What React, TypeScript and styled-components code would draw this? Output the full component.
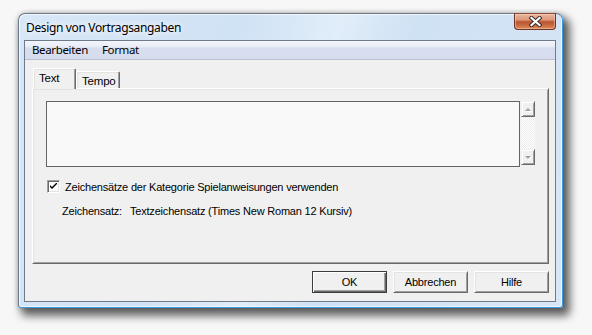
import React from "react";
import styled, { createGlobalStyle } from "styled-components";

const GlobalStyle = createGlobalStyle`
  html, body { margin: 0; padding: 0; background: #f7f7f7; }
  body { width: 592px; height: 335px; overflow: hidden; }
`;

const Page = styled.div`
  padding: 13px 0 0 18px;
  font-family: "Liberation Sans", Arial, sans-serif;
`;

const Window = styled.div`
  box-sizing: border-box;
  width: 545px;
  height: 295px;
  display: flex;
  flex-direction: column;
  padding: 0 6px 5px 5px;
  border: 1px solid #6b7888;
  border-right-color: #3a9be0;
  border-bottom-color: #3a9be0;
  border-radius: 7px 7px 3px 3px;
  background: linear-gradient(
    110deg,
    #d7e7f7 0%,
    #d0e2f5 35%,
    #e1edf9 50%,
    #cfe1f4 62%,
    #d8e7f7 100%
  );
  box-shadow: 0 0 5px rgba(0, 0, 0, 0.22), 5px 6px 9px 2px rgba(0, 0, 0, 0.6),
    inset 1px 1px 0 rgba(255, 255, 255, 0.75),
    inset -1px -1px 0 rgba(255, 255, 255, 0.6);
`;

const TitleBar = styled.div`
  height: 26px;
  display: flex;
  align-items: flex-start;
  justify-content: space-between;
`;

const Title = styled.span`
  padding-left: 2px;
  line-height: 27px;
  font-family: "Noto Sans", "Open Sans", sans-serif;
  font-size: 12px;
  letter-spacing: -0.35px;
  color: #000;
  text-shadow: 0 0 6px #fff, 0 0 10px rgba(255, 255, 255, 0.9);
`;

const CloseButton = styled.div`
  box-sizing: border-box;
  width: 42px;
  height: 17px;
  margin-top: -1px;
  border: 1px solid #6d3422;
  border-top-color: #8a4a35;
  border-radius: 0 0 4px 4px;
  display: flex;
  align-items: center;
  justify-content: center;
  background: linear-gradient(
    to bottom,
    #e9b7a0 0%,
    #dc9677 40%,
    #b9552f 52%,
    #c4653c 70%,
    #db8a5d 100%
  );
  box-shadow: inset 0 0 0 1px rgba(255, 220, 200, 0.45);
`;

const Client = styled.div`
  flex: 1;
  display: flex;
  flex-direction: column;
  border: 1px solid #6f7b88;
  background: #f0f0f0;
`;

const MenuBar = styled.div`
  height: 18px;
  display: flex;
  align-items: center;
  border-bottom: 1px solid #b9c0d2;
  background: linear-gradient(
    to bottom,
    #f3f5fb 0%,
    #e8ecf7 32%,
    #d9deef 38%,
    #d6dbee 100%
  );
`;

const MenuItem = styled.span`
  padding: 0 7px;
  font-family: "Noto Sans", "Open Sans", sans-serif;
  font-size: 11.5px;
  letter-spacing: -0.35px;
  line-height: 18px;
  color: #000;
`;

const Body = styled.div`
  flex: 1;
  display: flex;
  flex-direction: column;
  padding: 8px 6px 8px 7px;
  font-size: 11px;
  letter-spacing: -0.2px;
  color: #000;
`;

const TabStrip = styled.div`
  height: 21px;
  margin-bottom: -1px;
  padding-left: 1px;
  display: flex;
  align-items: flex-start;
  position: relative;
  z-index: 1;
`;

const Tab = styled.div<{ $active?: boolean }>`
  box-sizing: border-box;
  height: ${(p) => (p.$active ? "21px" : "17px")};
  margin-top: ${(p) => (p.$active ? "0" : "3px")};
  width: ${(p) => (p.$active ? "43px" : "44px")};
  padding: 3px 0 0 5px;
  font-size: 11.5px;
  line-height: 13px;
  background: #f0f0f0;
  border-top: 1px solid #fff;
  border-left: 1px solid #fff;
  border-right: 1px solid #696969;
  border-radius: 2px 2px 0 0;
  box-shadow: inset -1px 0 0 #a0a0a0, inset 1px 1px 0 #e3e3e3;
`;

const TabPanel = styled.div`
  box-sizing: border-box;
  height: 176px;
  display: flex;
  flex-direction: column;
  padding: 12px 12px 0 13px;
  border: 1px solid;
  border-color: #fff #696969 #696969 #fff;
  box-shadow: inset 1px 1px 0 #e3e3e3, inset -1px -1px 0 #a0a0a0;
`;

const EditRow = styled.div`
  display: flex;
  align-items: flex-start;
  gap: 1px;
`;

const TextBox = styled.div`
  box-sizing: border-box;
  width: 474px;
  height: 66px;
  border: 1px solid #646464;
  background: #f9f9f9;
`;

const ScrollBar = styled.div`
  width: 14px;
  height: 64px;
  display: flex;
  flex-direction: column;
`;

const ArrowButton = styled.div`
  box-sizing: border-box;
  height: 16px;
  display: flex;
  align-items: center;
  justify-content: center;
  background: #f0f0f0;
  border: 1px solid;
  border-color: #f0f0f0 #696969 #696969 #f0f0f0;
  box-shadow: inset 1px 1px 0 #fff, inset -1px -1px 0 #a0a0a0;
`;

const Arrow = styled.span<{ $down?: boolean }>`
  width: 0;
  height: 0;
  border-left: 3px solid transparent;
  border-right: 3px solid transparent;
  ${(p) =>
    p.$down
      ? "border-top: 3px solid #a0a0a0;"
      : "border-bottom: 3px solid #a0a0a0;"}
  filter: drop-shadow(1px 1px 0 #fff);
`;

const Track = styled.div`
  flex: 1;
  background-color: #f6f6f6;
  background-image: repeating-conic-gradient(#ffffff 0 25%, #ececec 0 50%);
  background-size: 2px 2px;
`;

const CheckRow = styled.label`
  margin-top: 13px;
  padding-left: 1px;
  display: flex;
  align-items: center;
  gap: 5px;
  height: 13px;
`;

const CheckBox = styled.span`
  box-sizing: border-box;
  width: 13px;
  height: 13px;
  display: flex;
  align-items: center;
  justify-content: center;
  background: #fff;
  border: 1px solid;
  border-color: #a0a0a0 #fff #fff #a0a0a0;
  box-shadow: inset 1px 1px 0 #696969, inset -1px -1px 0 #e3e3e3;
`;

const FontRow = styled.div`
  margin-top: 12px;
  padding-left: 16px;
  display: grid;
  grid-template-columns: 68px auto;
  line-height: 13px;
`;

const ButtonRow = styled.div`
  margin-top: 7px;
  display: flex;
  justify-content: flex-end;
  gap: 6px;
`;

const Button = styled.div<{ $default?: boolean }>`
  box-sizing: border-box;
  width: 75px;
  height: 22px;
  display: flex;
  align-items: center;
  justify-content: center;
  background: #f0f0f0;
  border: 1px solid;
  ${(p) =>
    p.$default
      ? `border-color: #3c3c3c;
         box-shadow: inset 1px 1px 0 #fff, inset -1px -1px 0 #696969, inset -2px -2px 0 #a0a0a0;`
      : `border-color: #fff #696969 #696969 #fff;
         box-shadow: inset 1px 1px 0 #e3e3e3, inset -1px -1px 0 #a0a0a0;`}
`;

const CloseIcon = () => (
  <svg width="13" height="11" viewBox="0 0 13 11">
    <path
      d="M2.5 2 L10.5 9 M10.5 2 L2.5 9"
      stroke="#3b2b28"
      strokeWidth="4.2"
      strokeLinecap="square"
      fill="none"
    />
    <path
      d="M2.5 2 L10.5 9 M10.5 2 L2.5 9"
      stroke="#ffffff"
      strokeWidth="2.2"
      strokeLinecap="square"
      fill="none"
    />
  </svg>
);

const CheckMark = () => (
  <svg width="7" height="7" viewBox="0 0 7 7">
    <path d="M0 2 L0 4 L2 6 L7 1 L7 -1 L2 4 Z" fill="#000" />
  </svg>
);

export default function App() {
  return (
    <>
      <GlobalStyle />
      <Page>
        <Window>
          <TitleBar>
            <Title>Design von Vortragsangaben</Title>
            <CloseButton>
              <CloseIcon />
            </CloseButton>
          </TitleBar>
          <Client>
            <MenuBar>
              <MenuItem>Bearbeiten</MenuItem>
              <MenuItem>Format</MenuItem>
            </MenuBar>
            <Body>
              <TabStrip>
                <Tab $active>Text</Tab>
                <Tab>Tempo</Tab>
              </TabStrip>
              <TabPanel>
                <EditRow>
                  <TextBox />
                  <ScrollBar>
                    <ArrowButton>
                      <Arrow />
                    </ArrowButton>
                    <Track />
                    <ArrowButton>
                      <Arrow $down />
                    </ArrowButton>
                  </ScrollBar>
                </EditRow>
                <CheckRow>
                  <CheckBox>
                    <CheckMark />
                  </CheckBox>
                  <span>Zeichensätze der Kategorie Spielanweisungen verwenden</span>
                </CheckRow>
                <FontRow>
                  <span>Zeichensatz:</span>
                  <span>Textzeichensatz (Times New Roman 12 Kursiv)</span>
                </FontRow>
              </TabPanel>
              <ButtonRow>
                <Button $default>OK</Button>
                <Button>Abbrechen</Button>
                <Button>Hilfe</Button>
              </ButtonRow>
            </Body>
          </Client>
        </Window>
      </Page>
    </>
  );
}
